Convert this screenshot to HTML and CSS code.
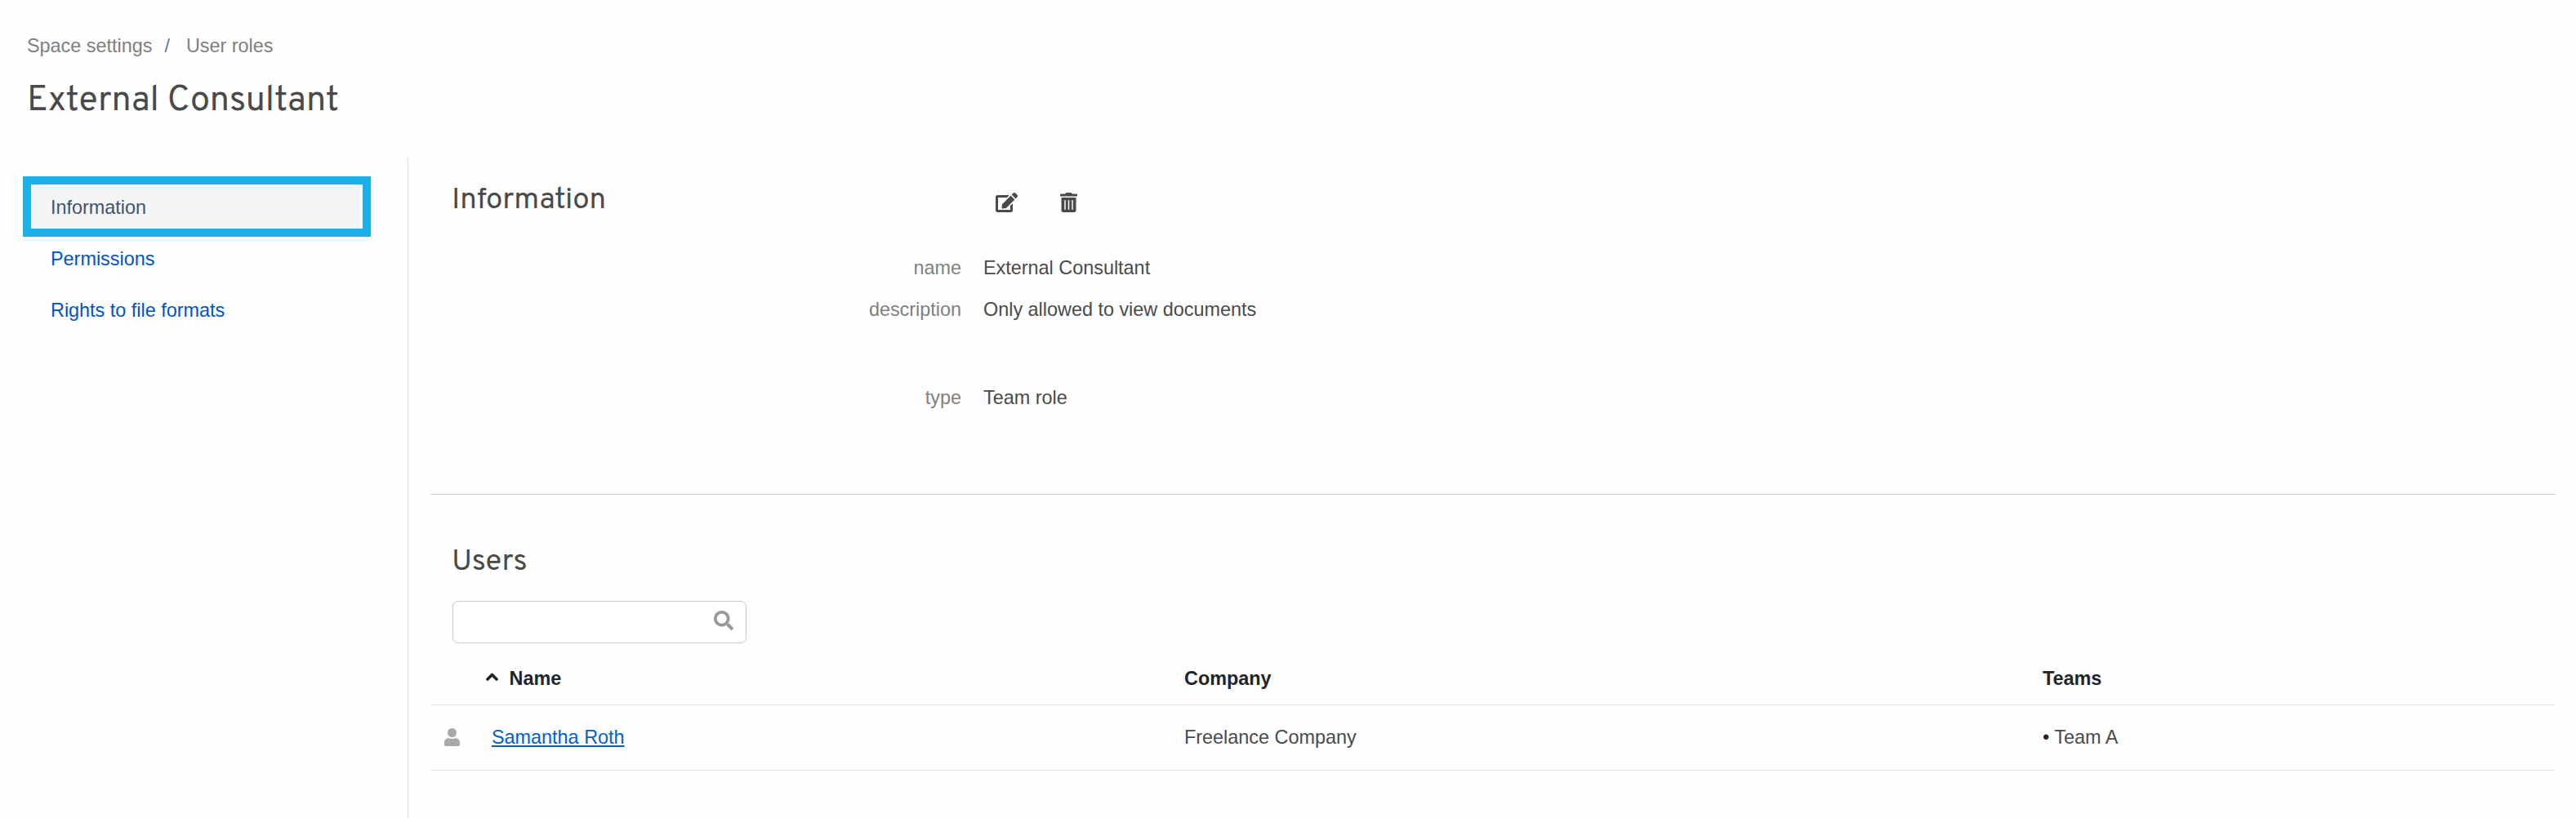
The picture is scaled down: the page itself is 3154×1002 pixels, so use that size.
FILE: index.html
```html
<!DOCTYPE html>
<html lang="en">
<head>
  <meta charset="UTF-8">
  <meta name="viewport" content="width=device-width, initial-scale=1.0">
  <title>External Consultant - User roles</title>
  <link rel="stylesheet" href="styles.css">
</head>
<body>
  <header class="page-header">
    <nav class="breadcrumb">
      <a href="#">Space settings</a><span class="separator">/</span><a href="#">User roles</a>
    </nav>
    <h1>External Consultant</h1>
  </header>

  <div class="layout">
    <aside class="sidebar">
      <ul class="side-nav">
        <li class="active"><a href="#">Information</a></li>
        <li><a href="#">Permissions</a></li>
        <li><a href="#">Rights to file formats</a></li>
      </ul>
    </aside>

    <main class="content">
      <section class="info">
        <div class="info-header">
          <h2>Information</h2>
          <button class="icon-button" title="Edit">
            <svg width="27" height="24" viewBox="0 0 576 512"><path fill="currentColor" d="M402.600 83.200l90.200 90.200c3.800 3.800 3.800 10 0 13.800L274.400 405.600l-92.800 10.300c-12.400 1.400-22.900-9.100-21.500-21.500l10.300-92.800L388.800 83.200c3.800-3.800 10-3.800 13.800 0zm162-22.900l-48.800-48.800c-15.200-15.200-39.900-15.200-55.200 0l-35.400 35.400c-3.800 3.800-3.800 10 0 13.800l90.200 90.200c3.800 3.800 10 3.800 13.800 0l35.400-35.400c15.200-15.300 15.200-40 0-55.200zM384 346.200V448H64V128h229.800c3.200 0 6.200-1.300 8.500-3.500l40-40c7.600-7.600 2.200-20.500-8.500-20.500H48C21.500 64 0 85.500 0 112v352c0 26.500 21.500 48 48 48h352c26.500 0 48-21.500 48-48V306.200c0-10.700-12.900-16-20.500-8.500l-40 40c-2.200 2.300-3.500 5.300-3.500 8.500z"/></svg>
          </button>
          <button class="icon-button" title="Delete">
            <svg width="21" height="24" viewBox="0 0 448 512"><path fill="currentColor" d="M32 464a48 48 0 0 0 48 48h288a48 48 0 0 0 48-48V128H32zm272-256a16 16 0 0 1 32 0v224a16 16 0 0 1-32 0zm-96 0a16 16 0 0 1 32 0v224a16 16 0 0 1-32 0zm-96 0a16 16 0 0 1 32 0v224a16 16 0 0 1-32 0zM432 32H312l-9.400-18.700A24 24 0 0 0 281.100 0H166.800a23.700 23.700 0 0 0-21.400 13.300L136 32H16A16 16 0 0 0 0 48v32a16 16 0 0 0 16 16h416a16 16 0 0 0 16-16V48a16 16 0 0 0-16-16z"/></svg>
          </button>
        </div>
        <dl class="details">
          <dt>name</dt>
          <dd>External Consultant</dd>
          <dt>description</dt>
          <dd>Only allowed to view documents</dd>
          <dt class="spaced">type</dt>
          <dd class="spaced">Team role</dd>
        </dl>
      </section>

      <section class="users">
        <h2>Users</h2>
        <div class="search">
          <input type="text" aria-label="Search users">
          <svg width="24" height="24" viewBox="0 0 512 512"><path fill="currentColor" d="M505 442.700L405.300 343c-4.500-4.500-10.600-7-17-7H372c27.600-35.300 44-79.700 44-128C416 93.100 322.900 0 208 0S0 93.100 0 208s93.100 208 208 208c48.300 0 92.700-16.400 128-44v16.300c0 6.400 2.500 12.500 7 17l99.700 99.700c9.400 9.400 24.600 9.400 33.900 0l28.300-28.300c9.400-9.400 9.400-24.600.1-34zM208 336c-70.700 0-128-57.200-128-128 0-70.700 57.200-128 128-128 70.700 0 128 57.200 128 128 0 70.700-57.200 128-128 128z"/></svg>
        </div>
        <table class="user-table">
          <thead>
            <tr>
              <th class="col-icon"></th>
              <th class="col-name">
                <svg width="15" height="10" viewBox="0 0 15 10"><path d="M2 8l5.500-5.500L13 8" fill="none" stroke="currentColor" stroke-width="3.600" stroke-linecap="round" stroke-linejoin="round"/></svg>
                <span>Name</span>
              </th>
              <th class="col-company">Company</th>
              <th>Teams</th>
            </tr>
          </thead>
          <tbody>
            <tr>
              <td class="col-icon">
                <svg width="19" height="22" viewBox="0 0 19 22"><circle cx="9.500" cy="5.500" r="5.500" fill="currentColor"/><path fill="currentColor" d="M5.500 12.300c2.500 1 5.500 1 8 0 3.300 0 5.500 2.200 5.500 5.200v2.500a2 2 0 0 1-2 2H2a2 2 0 0 1-2-2v-2.500c0-3 2.200-5.200 5.500-5.200z"/></svg>
              </td>
              <td class="col-name"><a href="#">Samantha Roth</a></td>
              <td class="col-company">Freelance Company</td>
              <td><span class="bullet">•</span> Team A</td>
            </tr>
          </tbody>
        </table>
      </section>
    </main>
  </div>
</body>
</html>
```
FILE: styles.css
```css
* {
  box-sizing: border-box;
}
body {
  margin: 0;
  height: 1002px;
  display: flex;
  flex-direction: column;
  overflow: hidden;
  font-family: Arial, "Liberation Sans", sans-serif;
  font-size: 23.4px;
  line-height: 32px;
  color: #4a4a4a;
  background-color: #fefefe;
}
h1, h2 {
  margin: 0;
  font-family: Overpass, Roboto, sans-serif;
  font-weight: 400;
  color: #4a4a4a;
}
h1 {
  font-size: 43px;
  line-height: 50px;
  margin-top: 27px;
}
h2 {
  font-size: 36.5px;
  line-height: 44px;
}
.page-header {
  height: 193px;
  padding: 40px 0 0 33px;
}
.breadcrumb a {
  color: #808080;
  text-decoration: none;
}
.separator {
  color: #6b778c;
  margin: 0 20px 0 15px;
}
.layout {
  flex: 1;
  display: flex;
}
.sidebar {
  width: 500px;
  padding: 29px 0 0 34px;
  border-right: 1px solid #e2e3e5;
}
.side-nav {
  list-style: none;
  margin: 0;
  padding: 0;
}
.side-nav li {
  position: relative;
  width: 407px;
  height: 63px;
  padding: 16px 28px;
}
.side-nav a {
  color: #0052cc;
  text-decoration: none;
}
.side-nav .active {
  background-color: #f4f5f7;
}
.side-nav .active a {
  color: #42526e;
}
/* highlight frame around the current entry */
.side-nav .active::after {
  content: "";
  position: absolute;
  box-sizing: border-box;
  top: -6px;
  left: -6px;
  width: 426px;
  height: 74px;
  border: 10px solid #19b1e8;
}
.content {
  flex: 1;
  padding: 0 25px 0 27px;
}
.info {
  height: 413px;
  padding: 28px 0 0 26px;
  border-bottom: 1px solid #c9c9c9;
}
.info-header {
  display: flex;
  align-items: center;
  height: 44px;
}
.info-header h2 {
  width: 666px;
  padding-top: 6px;
}
.icon-button {
  margin: 10px 52px 0 0;
  padding: 0;
  border: none;
  background: none;
  color: #4a4a4a;
  cursor: pointer;
}
.icon-button svg {
  display: block;
}
.details {
  display: grid;
  grid-template-columns: 624px 1fr;
  column-gap: 27px;
  row-gap: 19px;
  margin: 47px 0 0;
}
.details dt {
  text-align: right;
  color: #808080;
}
.details dd {
  margin: 0;
}
.details .spaced {
  margin-top: 57px;
}
.users {
  padding-top: 61px;
}
.users h2 {
  margin-left: 26px;
}
.search {
  position: relative;
  width: 360px;
  margin: 25px 0 0 27px;
}
.search input {
  display: block;
  width: 100%;
  height: 52px;
  padding: 0 50px 0 12px;
  border: 1px solid #c9c9c9;
  border-radius: 7px;
  background-color: #fff;
  font: inherit;
}
.search svg {
  position: absolute;
  top: 12px;
  right: 16px;
  color: #999;
}
.user-table {
  width: 100%;
  border-collapse: collapse;
  table-layout: fixed;
}
.user-table th,
.user-table td {
  padding: 0;
  text-align: left;
  border-bottom: 1px solid #e1e2e3;
}
.user-table th {
  height: 75px;
  padding-top: 16px;
  padding-bottom: 4px;
  color: #212529;
}
.user-table td {
  height: 80px;
}
.user-table .col-icon {
  width: 75px;
  padding-left: 17px;
  color: #a7a8aa;
}
.col-icon svg {
  display: block;
}
.col-name {
  width: 848px;
}
.col-company {
  width: 1051px;
}
th.col-name svg {
  margin: 0 7px 5px -7px;
}
.user-table a {
  color: #0060d0;
  text-decoration: underline;
  text-decoration-thickness: 2px;
  text-underline-offset: 2px;
}
.bullet {
  color: #212529;
}
```
